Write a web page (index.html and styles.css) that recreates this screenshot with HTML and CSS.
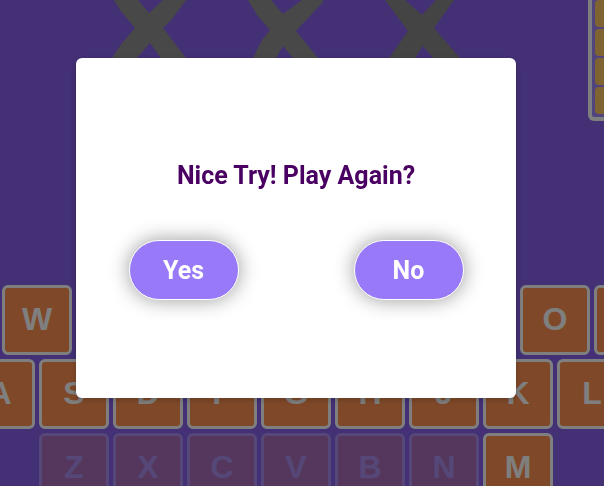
FILE: index.html
```html
<!DOCTYPE html>
<html lang="en">
<head>
<meta charset="utf-8">
<meta name="viewport" content="width=device-width, initial-scale=1">
<title>Word Game</title>
<link rel="stylesheet" href="styles.css">
</head>
<body>
<main class="game">
  <header class="board">
    <div class="strikes">
      <svg class="strike" viewBox="0 0 120 90" aria-hidden="true"><path d="M14 0L20 10L35 28L22 43L12 58L-6 90H16L37 58L50 43L61 58L85 90H110L86 58L63 28L72 19L86 0H63L49 13L38 0Z"/></svg>
      <svg class="strike" viewBox="0 0 120 90" aria-hidden="true"><path d="M12 0L21 15L34 30L26 40L17 58L4 90H22L40 58L47 46L57 58L80 90H104L82 58L60 31L87 2V0H66L47 14L35 0Z"/></svg>
      <svg class="strike strike-last" viewBox="0 0 120 90" aria-hidden="true"><path d="M13 0L36 31L17 58L-4 90H20L43 58L51 46L61 58L88 90H114L88 58L62 28L82 0H64L50 15L33 0Z"/></svg>
    </div>
    <div class="ladder">
      <span class="rung"></span><span class="rung"></span><span class="rung"></span><span class="rung"></span>
    </div>
  </header>
  <div class="keyboard">
    <div class="keys">
      <button class="key">Q</button><button class="key">W</button><button class="key">E</button><button class="key">R</button><button class="key">T</button><button class="key">Y</button><button class="key">U</button><button class="key">I</button><button class="key">O</button><button class="key">P</button>
    </div>
    <div class="keys">
      <button class="key">A</button><button class="key">S</button><button class="key">D</button><button class="key">F</button><button class="key">G</button><button class="key">H</button><button class="key">J</button><button class="key">K</button><button class="key">L</button>
    </div>
    <div class="keys">
      <button class="key" disabled>Z</button><button class="key" disabled>X</button><button class="key" disabled>C</button><button class="key" disabled>V</button><button class="key" disabled>B</button><button class="key" disabled>N</button><button class="key">M</button>
    </div>
  </div>
</main>
<div class="overlay">
  <section class="modal" role="dialog" aria-modal="true" aria-labelledby="modal-title">
    <h1 class="title" id="modal-title">Nice Try! Play Again?</h1>
    <div class="actions">
      <button class="choice">Yes</button>
      <button class="choice">No</button>
    </div>
  </section>
</div>
</body>
</html>
```
FILE: styles.css
```css
* {
  box-sizing: border-box;
}

body {
  margin: 0;
  overflow: hidden;
  background: #8660ea;
  font-family: "Liberation Sans", Arial, sans-serif;
}

.game {
  overflow: hidden;
}

.board {
  display: flex;
  align-items: flex-start;
}

.strikes {
  flex: 1;
  display: flex;
  justify-content: center;
  gap: 16px;
  padding-left: 4px;
}

.strike {
  width: 120px;
  height: 90px;
  overflow: visible;
  fill: #909090;
}

.strike-last {
  fill: #888888;
}

.ladder {
  flex: none;
  display: flex;
  flex-direction: column;
  gap: 2px;
  width: 100px;
  margin-right: -84px;
  padding: 0 3px 3px;
  border: 4px solid #ffffff;
  border-top: 0;
  border-radius: 0 0 6px 6px;
  background: #a088ff;
}

.rung {
  height: 27px;
  border-radius: 4px;
  background: #ffc660;
}

.keyboard {
  display: flex;
  flex-direction: column;
  gap: 4px;
  margin-top: 164px;
  padding-right: 12px;
}

.keys {
  display: flex;
  justify-content: center;
  gap: 4px;
}

.key {
  flex: none;
  width: 70px;
  height: 70px;
  padding: 0 0 2px;
  border: 3px solid #ffffff;
  border-radius: 6px;
  background: #ff9252;
  color: #ffffff;
  font: bold 32px "Liberation Sans", Arial, sans-serif;
}

.key:disabled {
  opacity: 0.3;
}

.overlay {
  position: fixed;
  inset: 0;
  display: flex;
  justify-content: center;
  align-items: flex-start;
  padding: 58px 12px 0 0;
  background: rgba(0, 0, 0, 0.5);
}

.modal {
  display: flex;
  flex-direction: column;
  align-items: center;
  width: 440px;
  max-width: 90%;
  padding: 98px 0;
  border-radius: 6px;
  background: #ffffff;
  box-shadow: 0 2px 6px rgba(0, 0, 0, 0.2);
}

.title {
  margin: 0 0 44px;
  color: #4a0062;
  font: bold 25px/40px Roboto, "Liberation Sans", sans-serif;
}

.actions {
  display: flex;
  gap: 115px;
}

.choice {
  width: 110px;
  height: 60px;
  padding: 0;
  border: 1px solid #ffffff;
  border-radius: 30px;
  background: #987af8;
  box-shadow: 0 0 20px rgba(0, 0, 0, 0.4);
  color: #ffffff;
  font: bold 25px Roboto, "Liberation Sans", sans-serif;
}
```
